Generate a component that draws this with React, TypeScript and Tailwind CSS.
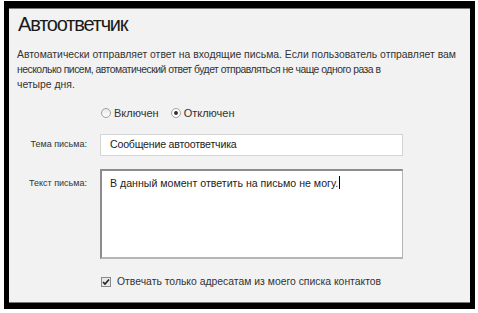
export default function App() {
  return (
    <div className="w-[478px] h-[313px] bg-white pt-px pl-[4px]" style={{ fontFamily: '"Liberation Sans", Arial, sans-serif' }}>
      <div className="w-[471px] h-[308px] border-l-[5px] border-t-[7px] border-r-[5px] border-b-[6px] border-black">
        <div className="h-full bg-[#f2f2f2] border-t border-[#777] border-b">
          <h1 className="pl-[9px] pt-[1px] text-[20px] leading-[28px] tracking-[-1.2px] text-[#1a1a1a]">Автоответчик</h1>

          <p className="mt-[9px] px-[8px] text-[10.4px] leading-[15px] text-[#333]">
            Автоматически отправляет ответ на входящие письма. Если пользователь отправляет вам
            <br />
            <span className="tracking-[-0.5px]">несколько писем, автоматический ответ будет отправляться не чаще одного раза в</span>
            <br />
            четыре дня.
          </p>

          <div className="mt-[13px] ml-[92px] flex items-center h-[16px] text-[11px] text-[#333]">
            <span className="w-[10px] h-[10px] rounded-full border border-[#a0a0a0] bg-gradient-to-b from-[#e8e8e8] to-white" />
            <span className="ml-[3px]">Включен</span>
            <span className="ml-[12px] w-[10px] h-[10px] rounded-full border border-[#a0a0a0] bg-white flex items-center justify-center">
              <span className="w-[4px] h-[4px] rounded-full bg-[#333]" />
            </span>
            <span className="ml-[3px]">Отключен</span>
          </div>

          <div className="mt-[13px] flex items-center">
            <label className="w-[78px] text-right text-[9px] text-[#333]">Тема письма:</label>
            <div className="ml-[13px] w-[303px] h-[22px] bg-white border border-[#d4d4d4] flex items-center pl-[9px] text-[10.6px] tracking-[-0.2px] text-[#222]">
              Сообщение автоответчика
            </div>
          </div>

          <div className="mt-[13px] flex items-start">
            <label className="w-[78px] text-right text-[9px] text-[#333] mt-[8px]">Текст письма:</label>
            <div className="ml-[13px] w-[303px] h-[90px] bg-white border-t-2 border-l-2 border-r border-b-2 border-t-[#8c8c8c] border-l-[#8c8c8c] border-r-[#b5b5b5] border-b-[#b5b5b5] pl-[8px] pt-[5px] text-[10.6px] leading-[14px] text-[#222]">
              В данный момент ответить на письмо не могу.
              <span className="inline-block w-px h-[13px] bg-black align-[-2px] ml-px" />
            </div>
          </div>

          <div className="mt-[15px] ml-[92px] flex items-center h-[16px] text-[10.4px] text-[#333]">
            <span className="w-[10px] h-[10px] border border-[#8a8a8a] bg-[#e8e8e8] flex items-center justify-center">
              <svg width="8" height="8" viewBox="0 0 8 8">
                <path d="M1 4 L3 6 L7 1.5" fill="none" stroke="#222" strokeWidth="1.6" />
              </svg>
            </span>
            <span className="ml-[6px]">Отвечать только адресатам из моего списка контактов</span>
          </div>
        </div>
      </div>
    </div>
  );
}
